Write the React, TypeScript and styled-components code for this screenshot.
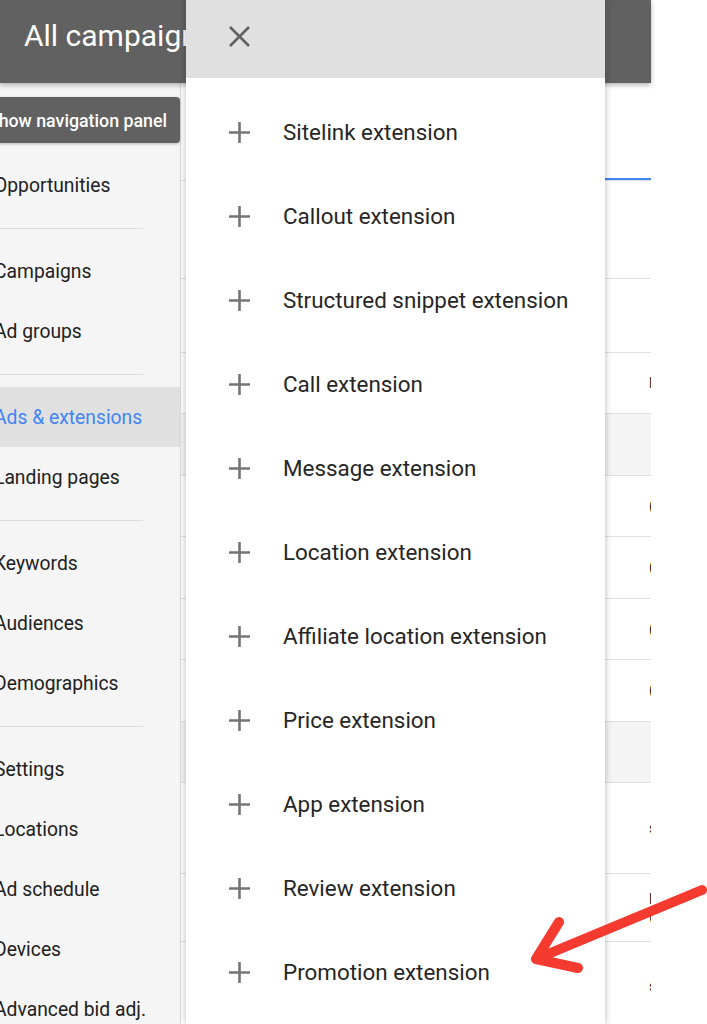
import React from "react";
import styled, { createGlobalStyle } from "styled-components";

const Global = createGlobalStyle`
  html, body { margin: 0; padding: 0; background: #fff; }
  body { font-family: Roboto, "Noto Sans", Arial, sans-serif; overflow: hidden; }
  * { box-sizing: border-box; }
`;

const Page = styled.div`
  position: relative;
  width: 707px;
  height: 1024px;
  overflow: hidden;
  background: #fff;
`;

const Shell = styled.div`
  width: 651px;
  height: 1024px;
  display: flex;
  flex-direction: column;
`;

const TopBar = styled.header`
  position: relative;
  z-index: 2;
  flex: none;
  height: 83px;
  background: #616161;
  color: #fff;
  padding: 19px 0 0 24px;
  font-size: 30px;
  line-height: 34px;
  white-space: nowrap;
  box-shadow: 0 2px 5px rgba(0, 0, 0, 0.3);
`;

const Body = styled.div`
  flex: 1;
  display: flex;
  min-height: 0;
`;

const Nav = styled.nav`
  flex: none;
  width: 181px;
  background: #f5f5f5;
  border-right: 1px solid #dadada;
  padding-top: 72px;
  overflow: hidden;
`;

const NavItem = styled.div<{ $active?: boolean }>`
  height: 60px;
  display: flex;
  align-items: center;
  font-size: 19.3px;
  white-space: nowrap;
  color: ${(p) => (p.$active ? "#4285f4" : "#212121")};
  background: ${(p) => (p.$active ? "#e0e0e0" : "transparent")};
`;

const NavLabel = styled.span`
  margin-left: -6px;
`;

const NavDivider = styled.div`
  width: 143px;
  height: 1px;
  background: #dcdcdc;
  margin: 13px 0 12px;
`;

const Main = styled.main`
  flex: 1;
  min-width: 0;
  background: #fff;
  overflow: hidden;
  display: flex;
  flex-direction: column;
`;

const TabsBar = styled.div`
  flex: none;
  height: 98px;
  display: flex;
  align-items: flex-end;
  padding-left: 300px;
  border-bottom: 1px solid #e0e0e0;
`;

const ActiveTab = styled.div`
  width: 400px;
  height: 40px;
  flex: none;
  border-bottom: 2px solid #4285f4;
`;

const Row = styled.div<{ $h: number; $shaded?: boolean }>`
  flex: none;
  height: ${(p) => p.$h}px;
  display: flex;
  flex-direction: column;
  justify-content: center;
  padding-left: 468px;
  border-bottom: 1px solid #e0e0e0;
  background: ${(p) => (p.$shaded ? "#f4f4f4" : "#fff")};
  font-size: 14px;
  line-height: 17px;
  color: #212121;
  white-space: nowrap;
`;

const Drawer = styled.aside`
  position: absolute;
  z-index: 3;
  top: 0;
  left: 186px;
  width: 419px;
  height: 1024px;
  background: #fff;
  box-shadow: 0 0 7px rgba(0, 0, 0, 0.28);
  display: flex;
  flex-direction: column;
`;

const DrawerHeader = styled.div`
  flex: none;
  height: 78px;
  background: #e0e0e0;
  padding: 26px 0 0 43px;
`;

const DrawerList = styled.ul`
  list-style: none;
  margin: 0;
  padding: 12px 0 0;
`;

const DrawerItem = styled.li`
  height: 84px;
  display: flex;
  align-items: center;
  gap: 33px;
  padding-left: 43px;
  font-size: 22.4px;
  color: #262626;
  white-space: nowrap;
`;

const Tooltip = styled.div`
  position: absolute;
  z-index: 4;
  top: 97px;
  right: 527px;
  height: 46px;
  display: flex;
  align-items: center;
  padding: 0 13px 0 16px;
  background: #616161;
  color: #fff;
  border-radius: 4px;
  font-size: 17.8px;
  font-weight: 500;
  white-space: nowrap;
  box-shadow: 0 1px 3px rgba(0, 0, 0, 0.25);
`;

const ArrowMark = styled.svg`
  position: absolute;
  z-index: 5;
  left: 520px;
  top: 870px;
`;

const PlusIcon = () => (
  <svg width="21" height="21" viewBox="0 0 21 21" style={{ flex: "none" }}>
    <path d="M10.5 0V21M0 10.5H21" stroke="#757575" strokeWidth="2.6" fill="none" />
  </svg>
);

const CloseIcon = () => (
  <svg width="21" height="21" viewBox="0 0 21 21">
    <path d="M1 1L20 20M20 1L1 20" stroke="#616161" strokeWidth="2.6" fill="none" />
  </svg>
);

type NavEntry = { label: string; active?: boolean } | "divider";

const navEntries: NavEntry[] = [
  { label: "Opportunities" },
  "divider",
  { label: "Campaigns" },
  { label: "Ad groups" },
  "divider",
  { label: "Ads & extensions", active: true },
  { label: "Landing pages" },
  "divider",
  { label: "Keywords" },
  { label: "Audiences" },
  { label: "Demographics" },
  "divider",
  { label: "Settings" },
  { label: "Locations" },
  { label: "Ad schedule" },
  { label: "Devices" },
  { label: "Advanced bid adj." },
];

const rows: { h: number; shaded?: boolean; lines: string[] }[] = [
  { h: 98, lines: [] },
  { h: 74, lines: [] },
  { h: 61, lines: ["l"] },
  { h: 62, shaded: true, lines: [] },
  { h: 61, lines: ["(415) 555-0132"] },
  { h: 62, lines: ["(415) 555-0147"] },
  { h: 61, lines: ["(415) 555-0178"] },
  { h: 62, lines: ["(415) 555-0190"] },
  { h: 61, shaded: true, lines: [] },
  { h: 91, lines: ["sale"] },
  { h: 68, lines: ["l", "(call)"] },
  { h: 90, lines: ["sale"] },
];

const extensions = [
  "Sitelink extension",
  "Callout extension",
  "Structured snippet extension",
  "Call extension",
  "Message extension",
  "Location extension",
  "Affiliate location extension",
  "Price extension",
  "App extension",
  "Review extension",
  "Promotion extension",
];

export default function App() {
  return (
    <Page>
      <Global />
      <Shell>
        <TopBar>All campaigns</TopBar>
        <Body>
          <Nav>
            {navEntries.map((e, i) =>
              e === "divider" ? (
                <NavDivider key={i} />
              ) : (
                <NavItem key={i} $active={e.active}>
                  <NavLabel>{e.label}</NavLabel>
                </NavItem>
              )
            )}
          </Nav>
          <Main>
            <TabsBar>
              <ActiveTab />
            </TabsBar>
            {rows.map((r, i) => (
              <Row key={i} $h={r.h} $shaded={r.shaded}>
                {r.lines.map((l, j) => (
                  <span key={j}>{l}</span>
                ))}
              </Row>
            ))}
          </Main>
        </Body>
      </Shell>

      <Tooltip>Show navigation panel</Tooltip>

      <Drawer>
        <DrawerHeader>
          <CloseIcon />
        </DrawerHeader>
        <DrawerList>
          {extensions.map((x) => (
            <DrawerItem key={x}>
              <PlusIcon />
              <span>{x}</span>
            </DrawerItem>
          ))}
        </DrawerList>
      </Drawer>

      <ArrowMark width="190" height="110" viewBox="520 870 190 110">
        <path
          d="M702 890L536 959M536 959L559 922M536 959L578 968"
          stroke="#f53b30"
          strokeWidth="10"
          strokeLinecap="round"
          strokeLinejoin="round"
          fill="none"
        />
      </ArrowMark>
    </Page>
  );
}
